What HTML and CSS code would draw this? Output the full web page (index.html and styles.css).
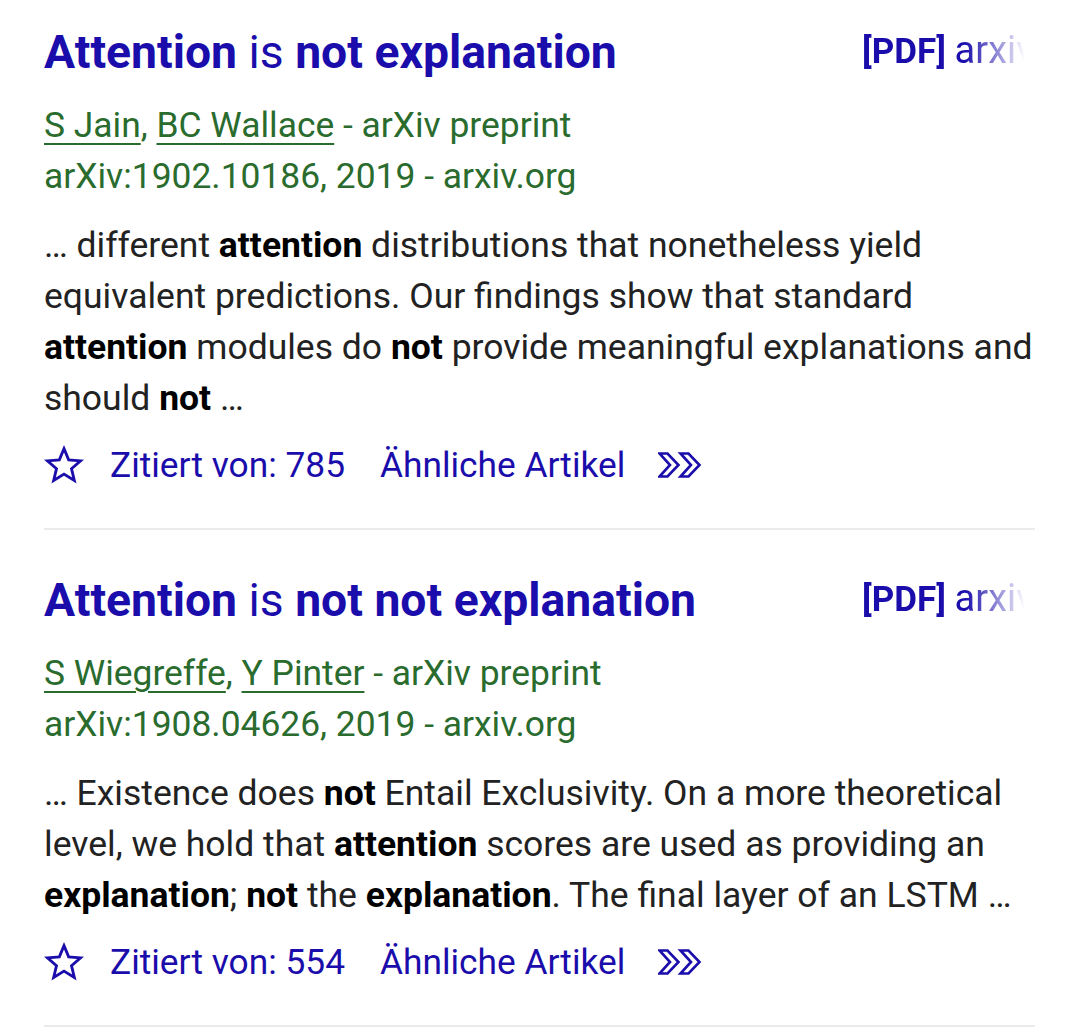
FILE: index.html
```html
<!DOCTYPE html>
<html lang="de">
<head>
<meta charset="utf-8">
<link rel="stylesheet" href="styles.css">
</head>
<body>
<div class="results">
  <div class="result">
    <div class="head">
      <h3 class="title"><b>Attention</b> is <b>not explanation</b></h3>
      <div class="pdf"><b>[PDF]</b> <span class="src">arxiv.org</span></div>
    </div>
    <div class="meta"><a>S Jain</a>, <a>BC Wallace</a> - arXiv preprint<br>arXiv:1902.10186, 2019 - arxiv.org</div>
    <div class="snippet">… different <b>attention</b> distributions that nonetheless yield equivalent predictions. Our findings show that standard <b>attention</b> modules do <b>not</b> provide meaningful explanations and should <b>not</b> …</div>
    <div class="actions">
      <svg class="star" viewBox="0 0 24 24"><polygon points="12,2.2 14.8,8.9 22,9.5 16.5,14.2 18.2,21.3 12,17.5 5.8,21.3 7.5,14.2 2,9.5 9.2,8.9"/></svg>
      <a>Zitiert von: 785</a>
      <a>Ähnliche Artikel</a>
      <svg class="more" viewBox="0 0 44 26"><polygon points="1.5,1.5 9.5,1.5 20.5,13 9.5,24.5 1.5,24.5 12,13"/><polygon points="22.5,1.5 30.5,1.5 41.5,13 30.5,24.5 22.5,24.5 33,13"/></svg>
    </div>
  </div>
  <div class="result">
    <div class="head">
      <h3 class="title"><b>Attention</b> is <b>not not explanation</b></h3>
      <div class="pdf"><b>[PDF]</b> <span class="src">arxiv.org</span></div>
    </div>
    <div class="meta"><a>S Wiegreffe</a>, <a>Y Pinter</a> - arXiv preprint<br>arXiv:1908.04626, 2019 - arxiv.org</div>
    <div class="snippet">… Existence does <b>not</b> Entail Exclusivity. On a more theoretical level, we hold that <b>attention</b> scores are used as providing an <b>explanation</b>; <b>not</b> the <b>explanation</b>. The final layer of an LSTM …</div>
    <div class="actions">
      <svg class="star" viewBox="0 0 24 24"><polygon points="12,2.2 14.8,8.9 22,9.5 16.5,14.2 18.2,21.3 12,17.5 5.8,21.3 7.5,14.2 2,9.5 9.2,8.9"/></svg>
      <a>Zitiert von: 554</a>
      <a>Ähnliche Artikel</a>
      <svg class="more" viewBox="0 0 44 26"><polygon points="1.5,1.5 9.5,1.5 20.5,13 9.5,24.5 1.5,24.5 12,13"/><polygon points="22.5,1.5 30.5,1.5 41.5,13 30.5,24.5 22.5,24.5 33,13"/></svg>
    </div>
  </div>
</div>
</body>
</html>
```
FILE: styles.css
```css
html, body {
  margin: 0;
  padding: 0;
  background: #fff;
}
body {
  font-family: Roboto, "Noto Sans", sans-serif;
  color: #222;
}
.results {
  padding: 26px 45px 0 44px;
  display: flex;
  flex-direction: column;
}
.result {
  padding: 44px 0 38px;
  border-bottom: 2px solid #ebebeb;
}
.result:first-child {
  padding-top: 0;
}
.head {
  display: flex;
  justify-content: space-between;
  align-items: flex-start;
}
.title {
  margin: 0;
  font-size: 46.3px;
  line-height: 52px;
  font-weight: 400;
  color: #1a0dab;
  white-space: nowrap;
}
.title b {
  font-weight: 700;
}
.pdf {
  width: 166px;
  margin-right: 7px;
  flex: none;
  overflow: hidden;
  white-space: nowrap;
  font-size: 35px;
  line-height: 48px;
  color: #1a0dab;
  -webkit-mask-image: linear-gradient(to right, #000 62%, rgba(0,0,0,0.3) 88%, transparent 98%);
  mask-image: linear-gradient(to right, #000 62%, rgba(0,0,0,0.3) 88%, transparent 98%);
}
.pdf b {
  font-weight: 700;
}
.src {
  font-size: 38px;
}
.meta {
  margin-top: 22px;
  font-size: 35.4px;
  line-height: 51px;
  color: #2a6b2e;
}
.meta a {
  text-decoration: underline;
  text-underline-offset: 6px;
  text-decoration-thickness: 2px;
}
.snippet {
  margin-top: 18px;
  font-size: 35.5px;
  line-height: 51px;
  color: #222;
}
.snippet b {
  font-weight: 700;
  color: #000;
}
.actions {
  margin-top: 15px;
  display: flex;
  align-items: center;
  height: 51px;
  font-size: 35.3px;
  color: #1a0dab;
}
.actions a {
  margin-right: 35px;
}
.star {
  width: 40px;
  height: 40px;
  margin-right: 26px;
  fill: none;
  stroke: #1a0dab;
  stroke-width: 1.7;
  stroke-linejoin: miter;
}
.more {
  width: 44px;
  height: 26px;
  margin-left: -2px;
  fill: none;
  stroke: #1a0dab;
  stroke-width: 2.6;
  stroke-linejoin: miter;
}
```
